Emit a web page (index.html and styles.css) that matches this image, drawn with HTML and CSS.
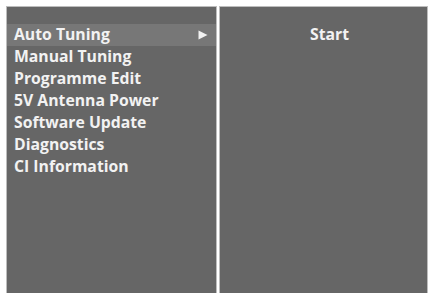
FILE: index.html
```
<!DOCTYPE html>
<html>
<head>
<meta charset="utf-8">
<link rel="stylesheet" href="styles.css">
</head>
<body>
<div class="screen">
  <div class="panel left">
    <ul class="menu">
      <li class="item active"><span>Auto Tuning</span><svg class="arrow" width="10" height="10" viewBox="0 0 10 10"><polygon points="0.5,0.5 9.5,5 0.5,9.5" fill="#f2f2f2"/></svg></li>
      <li class="item"><span>Manual Tuning</span></li>
      <li class="item"><span>Programme Edit</span></li>
      <li class="item"><span>5V Antenna Power</span></li>
      <li class="item"><span>Software Update</span></li>
      <li class="item"><span>Diagnostics</span></li>
      <li class="item"><span>CI Information</span></li>
    </ul>
  </div>
  <div class="panel right">
    <div class="sub">Start</div>
  </div>
</div>
</body>
</html>
```
FILE: styles.css
```
html, body { margin: 0; padding: 0; background: #fff; }
body { width: 429px; height: 293px; overflow: hidden; }
.screen {
  display: flex;
  margin: 6px 1px 0 6px;
  height: 287px;
  gap: 2px;
  font-family: "Open Sans", "DejaVu Sans", sans-serif;
  font-weight: bold;
  color: #f2f2f2;
}
.panel {
  background: #666;
  border: 1px solid #bdbdbd;
  border-bottom: none;
  box-sizing: border-box;
}
.left { width: 211px; padding-top: 17px; }
.right { flex: 1; padding-top: 17px; }
.menu { list-style: none; margin: 0; padding: 0; }
.item {
  display: flex;
  justify-content: space-between;
  align-items: center;
  height: 22px;
  box-sizing: border-box;
  padding: 0 8px 1px 7px;
  font-size: 15.75px;
  line-height: 21px;
}
.active { background: #777; }
.arrow { display: block; }
.sub {
  height: 22px;
  box-sizing: border-box;
  padding: 0 0 1px 12px;
  line-height: 21px;
  text-align: center;
  font-size: 15.75px;
}
```
